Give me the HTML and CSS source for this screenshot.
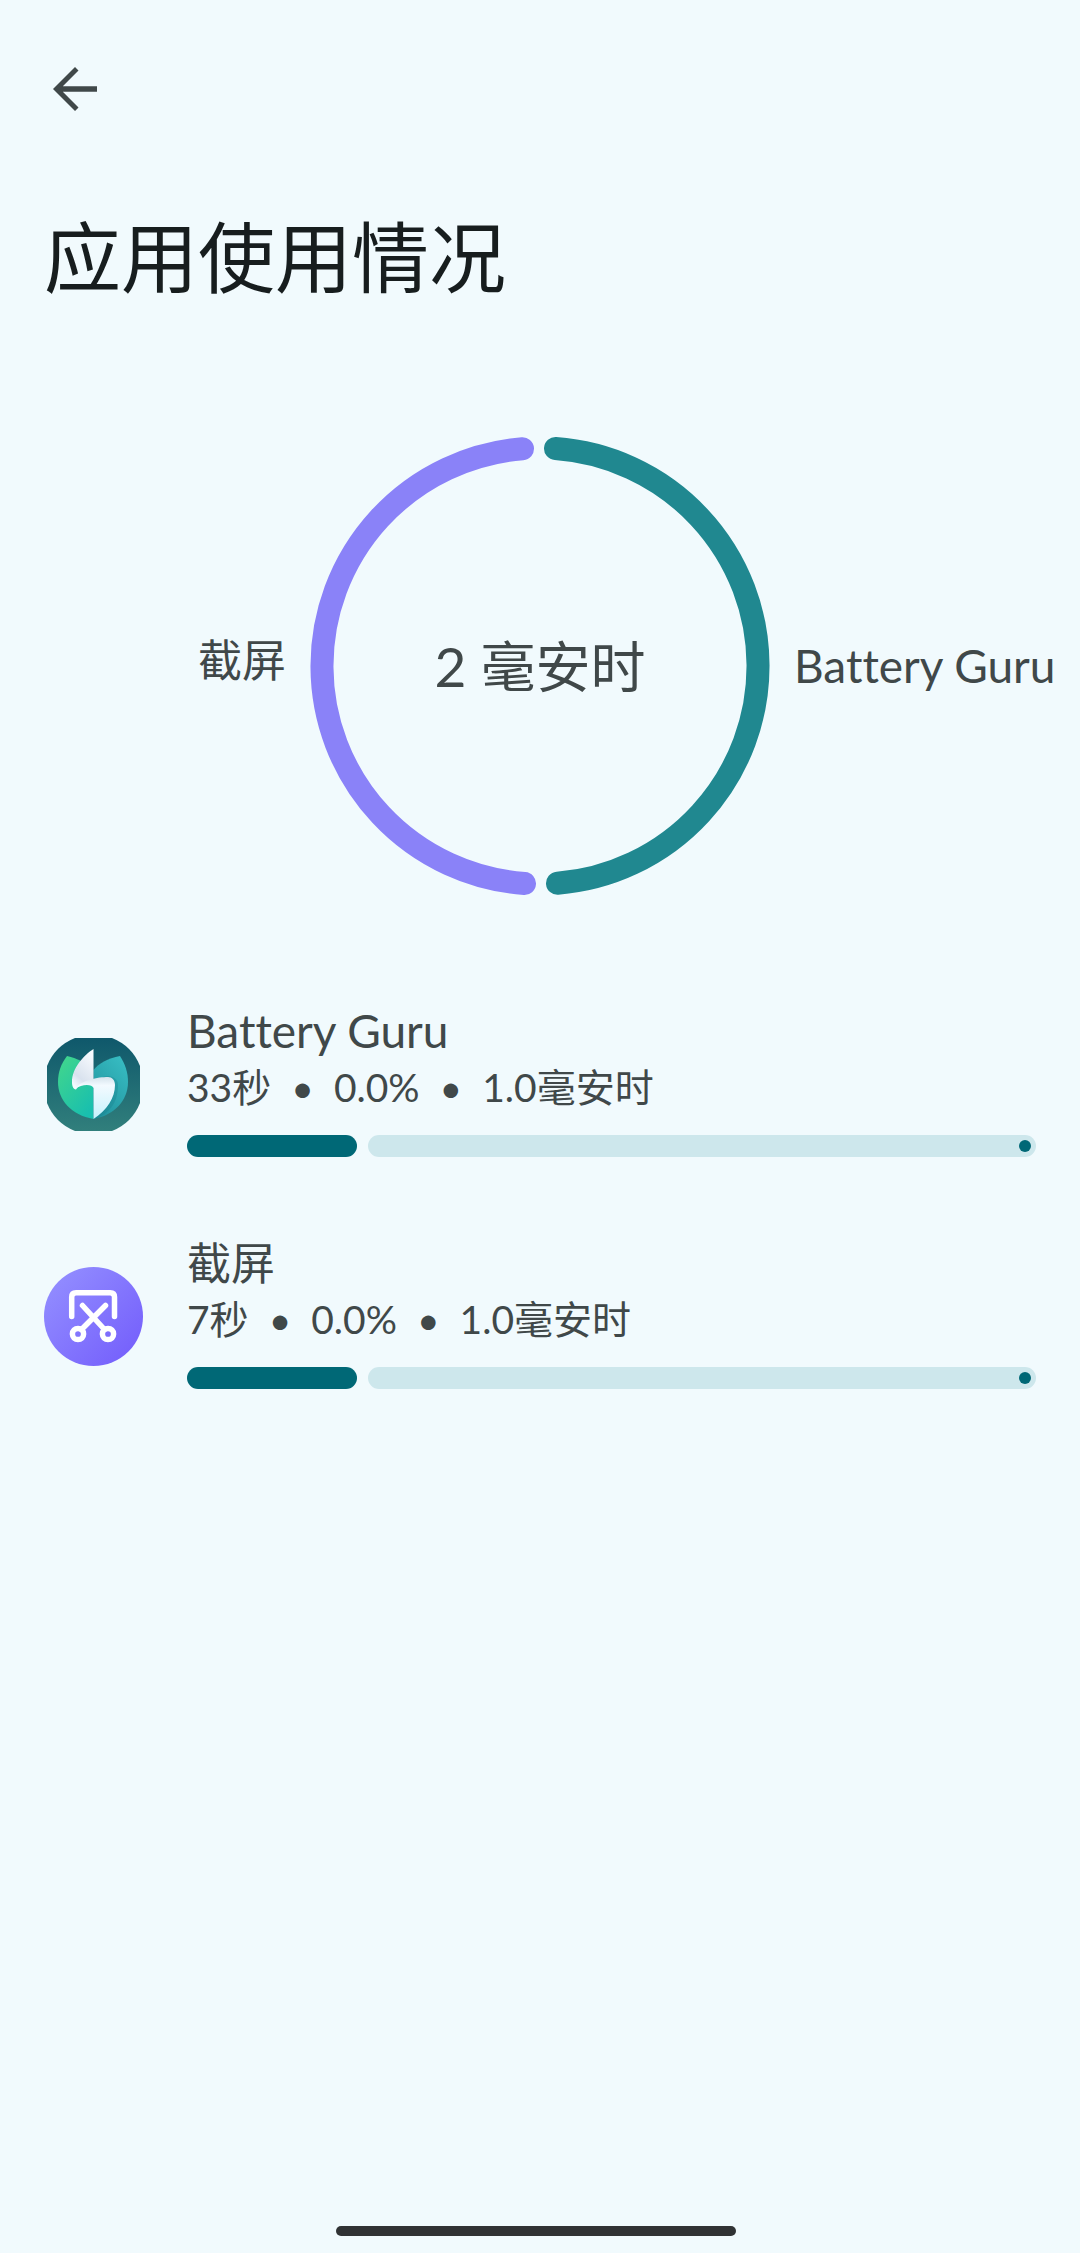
FILE: index.html
```html
<!DOCTYPE html>
<html lang="zh-CN">
<head>
<meta charset="utf-8">
<meta name="viewport" content="width=device-width, initial-scale=1">
<title>应用使用情况</title>
<link rel="stylesheet" href="styles.css">
</head>
<body>
<header class="header">
  <button class="back" type="button" aria-label="返回">
    <svg viewBox="0 0 64 64" aria-hidden="true"><path d="M53 29.300H18.800L34.500 13.600 31 10 9 32l22 22 3.500-3.600L18.800 34.800H53z" fill="currentColor"/></svg>
  </button>
  <h1 class="title">应用使用情况</h1>
</header>
<main class="main">
  <section class="chart" aria-label="耗电分布">
    <span class="chart-label chart-label-start">截屏</span>
    <div class="donut">
      <svg class="donut-ring" viewBox="0 0 460 460" aria-hidden="true">
        <g fill="none" stroke-width="23" stroke-linecap="round">
          <path d="M245.500 12.550A218 218 0 0 1 247.500 447.300" stroke="#208890"/>
          <path d="M214.500 447.450A218 218 0 0 1 212.500 12.700" stroke="#8a82f8"/>
        </g>
      </svg>
      <span class="donut-total">2 毫安时</span>
    </div>
    <span class="chart-label" lang="en">Battery Guru</span>
  </section>
  <ul class="apps">
    <li class="app">
      <svg class="app-icon" viewBox="0 0 99 99" aria-hidden="true">
        <defs>
          <linearGradient id="guru-bg" x1="0" y1="0" x2="0" y2="1"><stop offset="0" stop-color="#0f586b"/><stop offset="1" stop-color="#317f7c"/></linearGradient>
          <linearGradient id="guru-left" x1="0" y1="0" x2=".7" y2="1"><stop offset="0" stop-color="#43d78b"/><stop offset="1" stop-color="#19bfae"/></linearGradient>
          <linearGradient id="guru-right" x1=".8" y1="0" x2=".2" y2="1"><stop offset="0" stop-color="#37bcc2"/><stop offset="1" stop-color="#20919c"/></linearGradient>
          <linearGradient id="guru-top" x1=".8" y1="0" x2=".3" y2="1"><stop offset="0" stop-color="#fafcff"/><stop offset=".75" stop-color="#d9e2ee"/><stop offset="1" stop-color="#f5faff"/></linearGradient>
          <linearGradient id="guru-fold" x1=".3" y1="0" x2=".3" y2="1"><stop offset="0" stop-color="#d5e3ec"/><stop offset=".2" stop-color="#f3faff"/><stop offset="1" stop-color="#c5f2fc"/></linearGradient>
          <clipPath id="guru-clip"><path d="M31 3H68A50 50 0 0 1 96 31V68A50 50 0 0 1 68 96H31A50 50 0 0 1 3 68V31A50 50 0 0 1 31 3Z"/></clipPath>
        </defs>
        <g clip-path="url(#guru-clip)">
          <path d="M3 3h93v93H3z" fill="url(#guru-bg)"/>
          <path d="M49.500 84C27 80 14 65 14 47c0-10 3-18 9-26C31 23 36 25 40 28L49.500 46Z" fill="url(#guru-left)"/>
          <path d="M49.500 84C71 80 84 65 84 47c0-10-3-18-8-26C64 23 54 29 49.500 35Z" fill="url(#guru-right)"/>
          <path d="M49.500 84C66 79 74 67 74 50 74 45 70 41 63 41L50 44Z" fill="#187b88" opacity=".3"/>
          <path d="M49.500 14C40 20 28 33 28 47c0 4 1 7 4 7.500C35 50 42 46 49.500 46Z" fill="url(#guru-top)"/>
          <path d="M31 54C37 45 54 42 64 42c4 0 7 3 7 8 0 13-8 25-21.500 34V53C48 49 38 49 31 54Z" fill="url(#guru-fold)"/>
        </g>
      </svg>
      <div class="app-body">
        <h2 class="app-name" lang="en">Battery Guru</h2>
        <p class="app-meta"><span>33秒</span><span class="dot">•</span><span>0.0%</span><span class="dot">•</span><span>1.0毫安时</span></p>
        <div class="meter" role="progressbar" aria-label="Battery Guru" aria-valuenow="20"><span class="meter-fill" style="width:20%"></span><span class="meter-track"></span></div>
      </div>
    </li>
    <li class="app">
      <svg class="app-icon" viewBox="0 0 99 99" aria-hidden="true">
        <defs><linearGradient id="snip-bg" x1=".1" y1=".15" x2=".85" y2=".85"><stop offset="0" stop-color="#918bff"/><stop offset="1" stop-color="#7763fc"/></linearGradient></defs>
        <circle cx="49.500" cy="49.500" r="49.500" fill="url(#snip-bg)"/>
        <g fill="none" stroke="#fff" stroke-width="5.500" stroke-linecap="round" stroke-linejoin="round">
          <path d="M27.700 49.500V30Q27.700 25.700 32 25.700H66.200Q70.500 25.700 70.500 30V49.500"/>
          <path d="M38.500 38.500 60.500 62.500M61.500 38.500 37.500 62.500"/>
          <circle cx="34" cy="67" r="5.600"/><circle cx="64" cy="67" r="5.600"/>
        </g>
      </svg>
      <div class="app-body">
        <h2 class="app-name">截屏</h2>
        <p class="app-meta"><span>7秒</span><span class="dot">•</span><span>0.0%</span><span class="dot">•</span><span>1.0毫安时</span></p>
        <div class="meter" role="progressbar" aria-label="截屏" aria-valuenow="20"><span class="meter-fill" style="width:20%"></span><span class="meter-track"></span></div>
      </div>
    </li>
  </ul>
</main>
<footer class="home-bar"><span class="home-handle"></span></footer>
</body>
</html>
```
FILE: styles.css
```css
* {
  box-sizing: border-box;
}

body {
  margin: 0;
  min-height: 100vh;
  display: flex;
  flex-direction: column;
  background: #f1fafd;
  color: #404849;
  font-family: Lato, "Noto Sans CJK SC", sans-serif;
  font-variant-ligatures: none;
}

.header {
  padding: 57px 44px 0;
}

.back {
  display: block;
  width: 64px;
  height: 64px;
  padding: 0;
  border: 0;
  background: none;
  color: inherit;
}

.back svg {
  display: block;
}

.title {
  margin: 80px 0 0;
  font-size: 77px;
  line-height: 112px;
  font-weight: 400;
  color: #171d1e;
}

.main {
  flex: 1;
}

.chart {
  display: grid;
  grid-template-columns: 1fr 460px 1fr;
  align-items: center;
  column-gap: 24px;
  margin-top: 123px;
}

.chart-label {
  font-size: 44px;
  line-height: 56px;
  white-space: nowrap;
}

.chart-label-start {
  padding-bottom: 12px;
  text-align: right;
}

.donut {
  display: grid;
  place-items: center;
}

.donut-ring,
.donut-total {
  grid-area: 1 / 1;
}

.donut-ring {
  width: 100%;
}

.donut-total {
  font-size: 55px;
  line-height: 72px;
}

.apps {
  margin: 107px 0 0;
  padding: 0 44px;
  list-style: none;
  display: flex;
  flex-direction: column;
  gap: 70px;
}

.app {
  display: flex;
  align-items: center;
  gap: 44px;
}

.app-icon {
  width: 99px;
  height: 99px;
  flex: none;
}

.app-body {
  flex: 1;
  padding-bottom: 8px;
}

.app-name,
.app-meta {
  margin: 0;
  font-weight: 400;
}

.app-name {
  font-size: 44px;
  line-height: 56px;
}

.chart-label:lang(en),
.app-name:lang(en) {
  font-size: 46px;
}

.app-meta {
  display: flex;
  font-size: 39px;
  line-height: 56px;
}

.dot {
  margin: 0 20px;
}

.meter {
  display: flex;
  gap: 11px;
  height: 22px;
  margin-top: 20px;
}

.meter-fill,
.meter-track {
  border-radius: 11px;
}

.meter-fill {
  background: #006876;
}

.meter-track {
  flex: 1;
  display: flex;
  align-items: center;
  justify-content: flex-end;
  padding-right: 5px;
  background: #cde7ec;
}

.meter-track::after {
  content: "";
  width: 12px;
  height: 12px;
  border-radius: 50%;
  background: #006876;
}

.home-bar {
  display: flex;
  justify-content: center;
  padding: 0 8px 17px 0;
}

.home-handle {
  width: 37vw;
  height: 10px;
  border-radius: 5px;
  background: #303234;
}
```
